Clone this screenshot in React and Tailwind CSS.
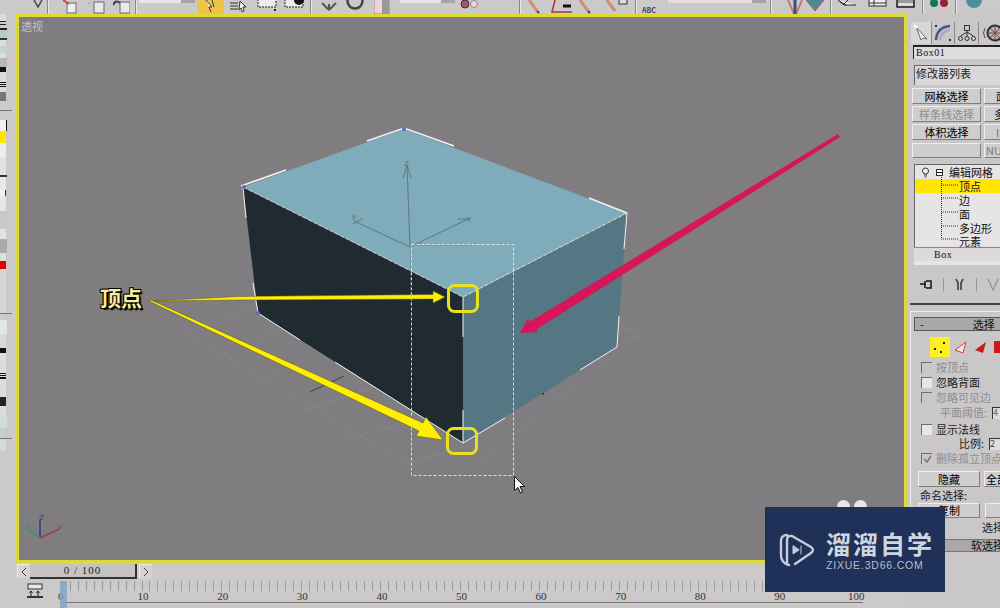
import React from "react";

const F = "font-['Noto_Sans_CJK_SC','Liberation_Sans',sans-serif]";

const strip = [
  ["h-[7px] w-[6px]", "bg-[#dcdada]"],
  ["h-[1px] w-[6px]", "bg-[#222]"],
  ["h-[2px] w-[6px]", "bg-[#ccc]"],
  ["h-[1px] w-[6px]", "bg-[#222]"],
  ["h-[3px] w-[6px]", "bg-[#ccc]"],
  ["h-[2px] w-[7px]", "bg-[#222]"],
  ["h-[8px] w-[7px]", "bg-[#b9cccc]"],
  ["h-[2px] w-[7px]", "bg-[#333]"],
  ["h-[6px] w-[6px]", "bg-[#ddd]"],
  ["h-[7px] w-[7px]", "bg-[#c3d3d3]"],
  ["h-[5px] w-[6px]", "bg-[#ddd]"],
  ["h-[9px] w-[7px]", "bg-[#b8b8b8]"],
  ["h-[5px] w-[6px]", "bg-[#111]"],
  ["h-[10px] w-[6px]", "bg-[#ddd]"],
  ["h-[1px] w-[6px]", "bg-[#111]"],
  ["h-[1px] w-[6px]", "bg-[#ddd]"],
  ["h-[1px] w-[6px]", "bg-[#111]"],
  ["h-[1px] w-[6px]", "bg-[#ddd]"],
  ["h-[1px] w-[6px]", "bg-[#111]"],
  ["h-[5px] w-[6px]", "bg-[#ddd]"],
  ["h-[9px] w-[6px]", "bg-[#777]"],
  ["h-[9px] w-[6px]", "bg-[#ccc]"],
  ["h-[1px] w-[12px]", "bg-[#777]"],
  ["h-[9px] w-[6px]", "bg-[#ccc]"],
  ["h-[11px] w-[7px]", "bg-[#f2f2f2] border-r border-[#111]"],
  ["h-[12px] w-[6px]", "bg-[#ffe600]"],
  ["h-[14px] w-[6px]", "bg-[#ececec]"],
  ["h-[18px] w-[6px]", "bg-[#e2e2e2]"],
  ["h-[2px] w-[7px]", "bg-[#333]"],
  ["h-[13px] w-[6px]", "bg-[#e8e8e8]"],
  ["h-[6px] w-[6px]", "bg-[#f2f2f2] border-r border-[#333]"],
  ["h-[15px] w-[6px]", "bg-[#e6e6e6]"],
  ["h-[18px] w-[7px]", "bg-[#c8c8c8]"],
  ["h-[10px] w-[6px]", "bg-[#e2e2e2]"],
  ["h-[14px] w-[7px]", "bg-[#aaa]"],
  ["h-[8px] w-[6px]", "bg-[#ddd]"],
  ["h-[8px] w-[6px]", "bg-[#e50000]"],
  ["h-[44px] w-[6px]", "bg-[#d6d6d6]"],
  ["h-[1px] w-[12px]", "bg-[#777]"],
  ["h-[6px] w-[6px]", "bg-[#ccc]"],
  ["h-[14px] w-[7px]", "bg-[#dfe6e6]"],
  ["h-[14px] w-[6px]", "bg-[#d9d9d9]"],
  ["h-[5px] w-[6px]", "bg-[#111]"],
  ["h-[20px] w-[6px]", "bg-[#ddd]"],
  ["h-[1px] w-[6px]", "bg-[#111]"],
  ["h-[1px] w-[6px]", "bg-[#ddd]"],
  ["h-[1px] w-[6px]", "bg-[#111]"],
  ["h-[1px] w-[6px]", "bg-[#ddd]"],
  ["h-[2px] w-[6px]", "bg-[#111]"],
  ["h-[18px] w-[6px]", "bg-[#ddd]"],
  ["h-[9px] w-[6px]", "bg-[#222]"],
  ["h-[10px] w-[6px]", "bg-[#ddd]"],
  ["h-[12px] w-[7px]", "bg-[#cfdcdc]"],
  ["h-[10px] w-[6px]", "bg-[#ccc]"],
  ["h-[1px] w-[12px]", "bg-[#777]"],
  ["h-[12px] w-[6px]", "bg-[#cfdcdc]"],
];

const Sep = ({ c }) => <div className={`h-[14px] w-[2px] border-l border-[#8a8888] bg-[#e8e6e6] ${c}`} />;

const Toolbar = () => (
  <div className="flex h-[14px] w-[1000px] items-start overflow-hidden bg-[#cbc9c9]">
    <svg className="ml-[33px] h-[14px] w-[12px]" viewBox="0 0 12 14"><path d="M1 0l4 7 4-7" fill="none" stroke="#444" strokeWidth="1.5" /></svg>
    <Sep c="ml-[2px]" />
    <svg className="ml-[14px] h-[14px] w-[14px]" viewBox="0 0 14 14"><rect x="4" y="3" width="9" height="10" fill="#eee" stroke="#667" /><path d="M0 0l6 4" stroke="#c44" strokeWidth="2" /></svg>
    <svg className="ml-[11px] h-[14px] w-[17px]" viewBox="0 0 17 14"><rect x="6" y="2" width="10" height="11" fill="#e8e8e8" stroke="#667" /><path d="M0 3h4" stroke="#889" strokeDasharray="1 1" /></svg>
    <svg className="ml-[8px] h-[14px] w-[17px]" viewBox="0 0 17 14"><rect x="7" y="2" width="10" height="11" fill="#e8e8e8" stroke="#667" /><path d="M0 5q3-6 7-2" fill="none" stroke="#345" strokeWidth="2" /></svg>
    <Sep c="ml-[5px]" />
    <div className="ml-[2px] flex h-[3px] w-[56px]"><div className="w-[42px] bg-[#e6e4e4]" /><div className="w-[14px] bg-[#a5a3a3]" /></div>
    <div className="ml-[2px] flex h-[14px] w-[27px] items-start justify-center bg-[#f0c24a]">
      <svg className="h-[12px] w-[14px]" viewBox="0 0 14 12"><path d="M2 0l6 7-3 0 2 5M8 0l2 7" fill="#fff" stroke="#333" /></svg>
    </div>
    <svg className="ml-[6px] h-[14px] w-[18px]" viewBox="0 0 18 14"><path d="M0 3h8M0 6h8M0 9h8" stroke="#333" /><path d="M10 1l6 6h-3l1 4-2 1-1-4-2 2z" fill="#eee" stroke="#333" /></svg>
    <svg className="ml-[9px] h-[14px] w-[20px]" viewBox="0 0 20 14"><rect x="1" y="-2" width="18" height="9" fill="#ececec" stroke="#222" strokeDasharray="2 1" /><rect x="17" y="9" width="2" height="2" fill="#222" /></svg>
    <svg className="ml-[7px] h-[14px] w-[20px]" viewBox="0 0 20 14"><rect x="1" y="-2" width="18" height="9" fill="#ececec" stroke="#222" strokeDasharray="2 1" /><circle cx="15" cy="0" r="5" fill="#111" /></svg>
    <Sep c="ml-[6px]" />
    <svg className="ml-[9px] h-[14px] w-[16px]" viewBox="0 0 16 14"><path d="M8 10L1 3M8 10l7-7M8 10V4" fill="none" stroke="#555" strokeWidth="2" /></svg>
    <svg className="ml-[9px] h-[14px] w-[18px]" viewBox="0 0 18 14"><circle cx="9" cy="1" r="7.500" fill="none" stroke="#444" strokeWidth="2.5" /></svg>
    <svg className="ml-[10px] h-[14px] w-[16px]" viewBox="0 0 16 14"><rect x="0" y="-2" width="15" height="16" fill="#efd6d6" stroke="#888" /><rect x="8" y="-2" width="7" height="16" fill="#999" /></svg>
    <div className="ml-[10px] flex h-[3px] w-[55px]"><div className="w-[41px] bg-[#e6e4e4]" /><div className="w-[14px] bg-[#a5a3a3]" /></div>
    <svg className="ml-[5px] h-[14px] w-[18px]" viewBox="0 0 18 14"><circle cx="5" cy="4" r="4" fill="#a55" stroke="#335" /><circle cx="14" cy="4" r="3.5" fill="#ddd" stroke="#b77" /></svg>
    <Sep c="ml-[41px]" />
    <svg className="ml-[7px] h-[14px] w-[14px]" viewBox="0 0 14 14"><path d="M1 0l8 11" stroke="#d68a70" strokeWidth="3" /><path d="M9 11l2 2" stroke="#444" strokeWidth="2" /></svg>
    <svg className="ml-[9px] h-[14px] w-[22px]" viewBox="0 0 22 14"><path d="M4 0L1 12h20" fill="none" stroke="#a33" strokeWidth="1.5" /><path d="M12 6h8" stroke="#111" strokeWidth="3" /></svg>
    <svg className="ml-[6px] h-[14px] w-[14px]" viewBox="0 0 14 14"><path d="M1 0l8 11" stroke="#d68a70" strokeWidth="3" /><path d="M9 11l2 2" stroke="#444" strokeWidth="2" /></svg>
    <svg className="ml-[13px] h-[14px] w-[22px]" viewBox="0 0 22 14"><path d="M1 0l8 11" stroke="#d68a70" strokeWidth="3" /><rect x="13" y="-2" width="8" height="6" fill="#ddd" stroke="#333" /></svg>
    <Sep c="ml-[7px]" />
    <div className={`ml-[5px] flex h-[14px] w-[23px] items-end text-[7px] leading-[8px] font-bold text-[#445] ${F}`}>ABC</div>
    <div className="ml-[3px] flex h-[3px] w-[98px]"><div className="w-[84px] bg-[#e6dede]" /><div className="w-[14px] bg-[#a5a3a3]" /></div>
    <Sep c="ml-[4px]" />
    <svg className="ml-[15px] h-[14px] w-[16px]" viewBox="0 0 16 14"><path d="M1 0l6 14M15 0L9 14" stroke="#c77" strokeWidth="2" /><path d="M8 0v14" stroke="#357" strokeWidth="3" /></svg>
    <svg className="ml-[3px] h-[14px] w-[18px]" viewBox="0 0 18 14"><path d="M0 0h18L9 11z" fill="#4e8a94" /><path d="M0 0l9 11 9-11" fill="none" stroke="#b55" /></svg>
    <Sep c="ml-[6px]" />
    <svg className="ml-[6px] h-[14px] w-[18px]" viewBox="0 0 18 14"><path d="M0 0l6 5h12M1 1l7 4M5 5l5-5" fill="#fff" stroke="#222" /></svg>
    <svg className="ml-[12px] h-[14px] w-[19px]" viewBox="0 0 19 14"><rect x="1" y="-2" width="17" height="8" fill="#eee" stroke="#333" /><path d="M1 3h17M6 -2v8" stroke="#333" /></svg>
    <svg className="ml-[9px] h-[14px] w-[19px]" viewBox="0 0 19 14"><rect x="1" y="-2" width="17" height="9" fill="#999" stroke="#222" strokeWidth="1.5" /><rect x="2" y="3" width="15" height="3" fill="#ddd" /></svg>
    <Sep c="ml-[7px]" />
    <svg className="ml-[6px] h-[14px] w-[19px]" viewBox="0 0 19 14"><circle cx="4" cy="3" r="4" fill="#175" /><circle cx="14" cy="3" r="4" fill="#923" /></svg>
    <Sep c="ml-[6px]" />
    <svg className="ml-[6px] h-[14px] w-[22px]" viewBox="0 0 22 14"><circle cx="11" cy="0" r="8" fill="#4d8d9c" /></svg>
  </div>
);

const Scene = () => (
  <svg className="absolute inset-0" width="885" height="545" viewBox="19 17 885 545">
    {/* ground grid */}
    <g stroke="#878587" strokeWidth="1" fill="none">
      <path d="M180 335L258 305M210 360L300 320M250 385L330 350M300 412L380 385M340 440L420 420M400 465L470 445M520 390L640 335M540 380L620 320M600 320L645 335" />
      <path d="M190 335L420 470M470 470L640 335M560 395L530 380" />
    </g>
    <path d="M310 392l34-16" stroke="#333" strokeOpacity="0.8" />
    <path d="M540 392l4 2" stroke="#222" strokeWidth="1.5" />
    {/* box */}
    <polygon points="243,187 404,129 627,213 463,297" fill="#7fabbb" />
    <polygon points="243,187 463,297 463,443 258,313" fill="#1f2a31" />
    <polygon points="463,297 627,213 617,347 463,443" fill="#557783" />
    {/* white edges */}
    <g fill="none" stroke="#f2f2f2" strokeWidth="1">
      <path d="M243 187L463 297L627 213" strokeDasharray="5 1" opacity="0.8" />
      <path d="M241 186L286 170M367 141L404 128L454 146M589 198L627 213" strokeWidth="1.5" />
      <path d="M243 187L246 218M253 283L258 313L300 340M463 297V337M463 410V443L335 362M463 443L505 418M580 370L617 347L619 316M627 213L624 249" />
    </g>
    <circle cx="404" cy="129" r="2" fill="#6a63c9" />
    <circle cx="244" cy="187" r="2" fill="#6a63c9" />
    <circle cx="258" cy="313" r="2" fill="#6a63c9" />
    <circle cx="613" cy="346" r="2" fill="#5a6fa9" />
    {/* tripod */}
    <g fill="none" stroke="#5d7780" strokeWidth="1">
      <path d="M410 247L407 165M403 178L407 165L411 178" />
      <path d="M410 247L354 221M353 224L363 218" />
      <path d="M412 246L470 218M458 219h12" />
    </g>
    <path d="M411 247v60M416 245h60" stroke="#777" strokeDasharray="3 2" fill="none" />
    <text x="404" y="166" fontSize="8" fill="#5d7780" fontFamily="Liberation Sans">Z</text>
    <text x="351" y="220" fontSize="8" fill="#5d7780" fontFamily="Liberation Sans">X</text>
    <text x="466" y="222" fontSize="8" fill="#5d7780" fontFamily="Liberation Sans">Y</text>
    {/* selection */}
    <rect x="411.5" y="244.5" width="102" height="231" fill="none" stroke="#eee" strokeDasharray="3 2" opacity="0.85" />
    {/* pink arrow */}
    <polygon points="520,333 527,320 531,321 838,134 840,137 537,329 538,332" fill="#d5175a" />
    {/* yellow arrows */}
    <polygon points="149,301 240,296.5 433,294.5 433,291 445,297 433,303 433,299 240,300" fill="#ffee00" stroke="#55551e" strokeWidth="0.5" />
    <polygon points="149,301 151,300 423,423 426,417 443,440 416,436 419,431" fill="#ffee00" stroke="#55551e" strokeWidth="0.5" />
    <rect x="448.5" y="285.5" width="29" height="26" rx="6" fill="none" stroke="#e8e020" strokeWidth="3" />
    <rect x="447.5" y="428.5" width="29" height="25" rx="6" fill="none" stroke="#e8e020" strokeWidth="3" />
    {/* cursor */}
    <path d="M514.500 476.500v14l3.500-3 2.500 5.500 2-1-2.500-5.500h4.500z" fill="#fff" stroke="#111" />
    {/* axis */}
    <g fill="none" strokeWidth="1.5">
      <path d="M40 538V520" stroke="#2b3f8c" />
      <path d="M40 538L59 529" stroke="#a33b46" />
      <path d="M40 538L29 530" stroke="#2d9a5a" />
    </g>
    <text x="39" y="520" fontSize="8" fill="#2b3f8c" fontFamily="Liberation Sans">Z</text>
    <text x="25" y="530" fontSize="8" fill="#2d9a5a" fontFamily="Liberation Sans">X</text>
    <text x="57" y="530" fontSize="8" fill="#a33b46" fontFamily="Liberation Sans">Y</text>
  </svg>
);

const Btn = ({ children, c = "" }) => (
  <div className={`flex items-center justify-center border-t border-l border-[#eeeeee] border-r-[#7f7d7d] border-b-[#7f7d7d] border-r border-b bg-[#cfcdcd] text-[11px] leading-none whitespace-nowrap ${c}`}>{children}</div>
);

const Check = ({ label, checked, dim, c = "" }) => (
  <div className={`flex h-[15px] items-center whitespace-nowrap text-[11px] leading-none ${dim ? "text-[#8f8d8d]" : "text-[#1a1a1a]"} ${c}`}>
    <span className={`mr-[4px] flex h-[11px] w-[11px] shrink-0 items-center justify-center border-t border-l border-[#6f6d6d] text-[10px] ${dim ? "bg-[#c9c7c7]" : "bg-[#e8e6e6]"}`}>
      {checked && <svg width="9" height="9" viewBox="0 0 9 9"><path d="M1 4l3 3 4-6" fill="none" stroke="#777" strokeWidth="1.5" /></svg>}
    </span>
    {label}
  </div>
);

const Stack = () => (
  <div className="relative ml-[7px] mt-[6px] h-[83px] w-[90px] border-t border-l border-[#666] bg-[#e6e4e4] text-[11px] leading-none text-[#111]">
    <div className="flex h-[14px] items-center">
      <svg className="ml-[6px] h-[11px] w-[9px]" viewBox="0 0 9 11"><circle cx="4.5" cy="4" r="3" fill="#f3f3e0" stroke="#333" /><path d="M3 8h3M3.500 10h2" stroke="#333" /></svg>
      <span className="ml-[6px] flex h-[7px] w-[7px] items-center justify-center border border-[#333] bg-white"><span className="h-[1px] w-[5px] bg-[#111]" /></span>
      <span className="ml-[6px]">编辑网格</span>
    </div>
    <div className="flex h-[14px] items-center bg-[#ffe600] pl-[44px]">顶点</div>
    <div className="flex h-[14px] items-center pl-[44px]">边</div>
    <div className="flex h-[14px] items-center pl-[44px]">面</div>
    <div className="flex h-[14px] items-center pl-[44px]">多边形</div>
    <div className="flex h-[13px] items-center pl-[44px]">元素</div>
    <svg className="absolute left-[26px] top-[12px]" width="17" height="70" viewBox="0 0 17 70"><path d="M0.500 0V62M0 8H17M0 21H17M0 35H17M0 49H17M0 62H17" stroke="#333" strokeDasharray="1 1" fill="none" /></svg>
  </div>
);

const Panel = () => (
  <div className={`h-full w-[93px] shrink-0 overflow-hidden bg-[#c9c7c7] ${F}`}>
    <div className="flex h-[31px] w-[110px] items-center pl-[4px] pt-[6px]">
      <div className="flex h-[22px] w-[21px] items-center justify-center border-r border-[#8a8888] bg-[#d8d6d6]">
        <svg width="18" height="18" viewBox="0 0 18 18"><path d="M4 3l11 12-4-1-2 2z" stroke="#667" strokeWidth="1" fill="#eee" /><path d="M2 1l3 3" stroke="#fff" strokeWidth="2" /></svg>
      </div>
      <div className="flex h-[22px] w-[23px] items-center justify-center border-r border-[#8a8888]">
        <svg width="18" height="18" viewBox="0 0 18 18"><path d="M2 16Q3 3 16 2" fill="none" stroke="#3f5a85" strokeWidth="2.5" /><path d="M6 16Q7 7 16 6" fill="none" stroke="#aab" strokeWidth="2.5" /><rect x="1" y="1" width="2" height="2" fill="#333" /><rect x="15" y="15" width="2" height="2" fill="#333" /></svg>
      </div>
      <div className="flex h-[22px] w-[24px] items-center justify-center border-r border-[#8a8888]">
        <svg width="18" height="18" viewBox="0 0 18 18" fill="none" stroke="#333"><rect x="6.5" y="1.5" width="5" height="5" /><circle cx="2.5" cy="14.5" r="2" /><circle cx="9" cy="14.5" r="2" /><circle cx="15.5" cy="14.5" r="2" /><path d="M9 7v5M2.500 12l6.500-4 6.500 4" /></svg>
      </div>
      <div className="ml-[3px] flex h-[22px] w-[22px] items-center justify-center">
        <svg width="22" height="18" viewBox="0 0 22 18"><circle cx="13" cy="9" r="7.5" fill="#caa" stroke="#333" strokeWidth="2" /><path d="M13 2v14M6 9h14M8 4l10 10M18 4L8 14" stroke="#555" /><path d="M3 4q-3 5 0 10" fill="none" stroke="#555" /></svg>
      </div>
    </div>
    <div className="ml-[6px] flex h-[14px] w-[90px] items-start border-t-2 border-l border-[#222] bg-[#dedcdc] pl-[2px] font-['Liberation_Serif',serif] text-[10px] leading-[11px] tracking-[0.5px] text-[#111]">Box01</div>
    <div className="ml-[7px] mt-[6px] flex h-[20px] w-[90px] items-start border-t border-l border-[#666] bg-[#d9d7d7] pl-[1px] pt-[2px] text-[11px] leading-none text-[#222]">修改器列表</div>
    <div className="ml-[5px] mt-[3px] flex h-[16px] w-[100px] gap-[3px]">
      <Btn c="w-[69px] shrink-0">网格选择</Btn><Btn c="w-[30px] shrink-0 justify-start pl-[11px]">面</Btn>
    </div>
    <div className="ml-[5px] mt-[2px] flex h-[16px] w-[100px] gap-[3px]">
      <Btn c="w-[69px] shrink-0 text-[#8f8d8d]">样条线选择</Btn><Btn c="w-[30px] shrink-0 justify-start pl-[9px]">多</Btn>
    </div>
    <div className="ml-[5px] mt-[2px] flex h-[16px] w-[100px] gap-[3px]">
      <Btn c="w-[69px] shrink-0">体积选择</Btn><Btn c="w-[30px] shrink-0 justify-start pl-[11px] text-[#777]">I</Btn>
    </div>
    <div className="ml-[5px] mt-[3px] flex h-[15px] w-[100px] gap-[3px]">
      <Btn c="w-[69px] shrink-0" /><Btn c="w-[30px] shrink-0 justify-start pl-[1px] text-[8px] text-[#777]">NURBS</Btn>
    </div>
    <Stack />
    <div className="ml-[7px] flex h-[14px] w-[90px] items-center border-t border-[#8a8888] bg-[#dcdada] pl-[20px] font-['Liberation_Serif',serif] text-[10px] leading-none tracking-[0.5px] text-[#111]">Box</div>
    <div className="ml-[7px] h-[4px] w-[90px] bg-[#e6e4e4]" />
    <div className="ml-[13px] mt-[12px] flex h-[15px] w-[90px] items-center">
      <svg width="14" height="11" viewBox="0 0 14 11"><path d="M0 5h5M5 2v7M6 2h5v7H6" fill="none" stroke="#111" strokeWidth="1.5" /></svg>
      <div className="ml-[9px] h-[14px] w-[1px] bg-[#999]" />
      <svg className="ml-[11px]" width="9" height="13" viewBox="0 0 9 13"><path d="M1 1l2 4v7M8 1L6 5v7" fill="none" stroke="#333" strokeWidth="1.5" /></svg>
      <div className="ml-[12px] h-[14px] w-[1px] bg-[#999]" />
      <svg className="ml-[10px]" width="12" height="13" viewBox="0 0 12 13"><path d="M1 1l5 11 5-11" fill="none" stroke="#999" strokeWidth="1.5" /></svg>
    </div>
    <div className="mt-[11px] ml-[3px] h-[2px] w-[95px] bg-[#444]" />
    <div className="ml-[3px] mt-[6px] w-[95px] border-t border-l border-[#eeeeee]">
      <div className="ml-[3px] mt-[5px] flex h-[14px] w-[90px] items-center border border-[#555] bg-[#a9a7a7] text-[11px] leading-none text-[#111]">
        <span className="ml-[5px]">-</span><span className="ml-[49px]">选择</span>
      </div>
      <div className="ml-[19px] mt-[6px] flex h-[20px] items-center">
        <div className="relative h-[20px] w-[20px] bg-[#ffee22]">
          <span className="absolute left-[4px] top-[11px] h-[2px] w-[2px] bg-[#222]" />
          <span className="absolute left-[13px] top-[5px] h-[2px] w-[2px] bg-[#222]" />
          <span className="absolute left-[10px] top-[14px] h-[2px] w-[2px] bg-[#222]" />
        </div>
        <svg className="ml-[4px]" width="13" height="13" viewBox="0 0 13 13"><path d="M1 9L12 1 9 12z" fill="#f2e2e2" stroke="#c44" /></svg>
        <svg className="ml-[7px]" width="13" height="13" viewBox="0 0 13 13"><path d="M1 9L12 1 9 12z" fill="#cc1a1a" /></svg>
        <div className="ml-[7px] h-[12px] w-[8px] bg-[#cc1a1a]" />
      </div>
      <div className="ml-[10px] mt-[3px]">
        <Check label="按顶点" dim />
        <Check label="忽略背面" />
        <Check label="忽略可见边" dim />
        <div className="flex h-[15px] items-center whitespace-nowrap pl-[19px] text-[11px] leading-none text-[#8f8d8d]">平面阈值:<span className="ml-[5px] h-[12px] w-[20px] border-t border-l border-[#333] bg-[#ddd] text-[9px] text-[#666]">4</span></div>
        <div className="h-[2px]" />
        <Check label="显示法线" />
        <div className="flex h-[13px] items-center whitespace-nowrap pl-[38px] text-[11px] leading-none text-[#222]">比例:<span className="ml-[5px] h-[12px] w-[20px] border-t border-l border-[#333] bg-[#ddd] text-[9px] text-[#444]">2</span></div>
        <div className="h-[1px]" />
        <Check label="删除孤立顶点" checked dim />
      </div>
      <div className="ml-[7px] mt-[5px] flex h-[16px] w-[100px] gap-[4px]">
        <Btn c="w-[62px] shrink-0">隐藏</Btn><Btn c="w-[34px] shrink-0 justify-start pl-[1px]">全部</Btn>
      </div>
      <div className="ml-[9px] mt-[1px] flex h-[15px] items-center whitespace-nowrap text-[11px] leading-none text-[#222]">命名选择:</div>
      <div className="ml-[7px] flex h-[15px] w-[100px] gap-[5px]">
        <Btn c="w-[62px] shrink-0">复制</Btn><Btn c="w-[30px] shrink-0" />
      </div>
      <div className="mt-[2px] flex h-[15px] items-center pl-[71px] text-[11px] leading-none text-[#222] whitespace-nowrap">选择</div>
      <div className="ml-[3px] mt-[4px] flex h-[13px] w-[90px] items-center border border-[#777] bg-[#a9a7a7] pl-[56px] text-[11px] leading-none whitespace-nowrap text-[#111]">软选择</div>
    </div>
  </div>
);

const Timeline = () => (
  <div className={`flex h-[16px] items-center pl-[17px] ${F}`}>
    <div className="flex h-[14px] w-[13px] items-center justify-center border-t border-l border-[#eee] bg-[#d4d2d2]">
      <svg width="6" height="10" viewBox="0 0 6 10"><path d="M5 1L1 5l4 4" fill="none" stroke="#444" /></svg>
    </div>
    <div className="flex h-[15px] w-[107px] items-center justify-center border-r-2 border-b-2 border-[#333] bg-[#c5c3c3] font-['Liberation_Serif',serif] text-[11px] leading-none tracking-[1px] text-[#222]">0 / 100</div>
    <div className="ml-[2px] flex h-[14px] w-[13px] items-center justify-center border-t border-l border-[#eee] bg-[#d4d2d2]">
      <svg width="6" height="10" viewBox="0 0 6 10"><path d="M1 1l4 4-4 4" fill="none" stroke="#444" /></svg>
    </div>
  </div>
);

const labels = [0, 10, 20, 30, 40, 50, 60, 70, 80, 90];

const Ruler = () => (
  <div className="flex h-[29px] items-start">
    <svg className="ml-[27px] mt-[4px]" width="16" height="16" viewBox="0 0 16 16"><rect x="1" y="1" width="14" height="5" fill="#e8e8e8" stroke="#333" /><path d="M4 8v5M2.500 10L4 8l1.500 2M11 8v5M9.500 10L11 8l1.500 2" fill="none" stroke="#222" /><path d="M0 14h16" stroke="#333" strokeWidth="2" /></svg>
    <div className="relative ml-[17px] mt-[2px] h-[27px] w-[822px] font-['Liberation_Serif',serif]">
      <div className="flex h-[10px] pl-[2px]">
        {Array.from({ length: 101 }, (_, i) => (
          <div key={i} className="h-[10px] w-[7.96px] shrink-0 border-l border-[#9b9999]" />
        ))}
      </div>
      <div className="-ml-[2px] flex h-[10px] w-[822px]">
        {labels.map((n) => (
          <div key={n} className="w-[79.6px] shrink-0 text-[11px] leading-[11px] text-[#333]">{n}</div>
        ))}
        <div className="-ml-[6px] shrink-0 text-[11px] leading-[11px] text-[#333]">100</div>
      </div>
      <div className="mt-[1px] h-[1px] w-[803px] bg-[#777]" />
      <div className="absolute left-0 top-0 h-[27px] w-[7px] bg-[#7fa8c6] opacity-80" />
    </div>
  </div>
);

const Watermark = () => (
  <div className="absolute left-[765px] top-[507px] flex h-[85px] w-[180px] items-center bg-[#1f3059] pl-[14px] text-[#d0d6e0]">
    <svg width="36" height="36" viewBox="0 0 36 36" fill="none" stroke="#c6ccd8" strokeWidth="2.4" strokeLinejoin="round" strokeLinecap="round">
      <path d="M10 33Q2 31 2 23V9Q2 3 8 3" />
      <path d="M8 31V8Q8 3 13 4L32 15Q36 18 32 21L16 32" />
      <path d="M14 14v8l6-4zM22 14v8" fill="#c6ccd8" strokeWidth="1" />
    </svg>
    <div className="ml-[11px] flex flex-col">
      <div className={`text-[25px] leading-[30px] font-bold tracking-[2px] whitespace-nowrap ${F}`}>溜溜自学</div>
      <div className="mt-[1px] font-['Liberation_Sans',sans-serif] text-[10.500px] leading-[12px] tracking-[0.8px] whitespace-nowrap text-[#b6bdcc]">ZIXUE.3D66.COM</div>
    </div>
  </div>
);

export default function App() {
  return (
    <div className="relative h-[608px] w-[1000px] overflow-hidden bg-[#cbc9c9]">
      <Toolbar />
      <div className="flex h-[594px]">
        <div className="flex w-[907px] flex-col">
          <div className="flex h-[551px]">
            <div className="flex w-[16px] shrink-0 flex-col overflow-hidden">
              {strip.map(([size, col], i) => (
                <div key={i} className={`${size} ${col} shrink-0`} />
              ))}
            </div>
            <div className={`relative flex-1 border-[3px] border-[#dcd93a] bg-[#7f7d7f] ${F}`}>
              <div className="absolute left-[2px] top-[4px] text-[11px] leading-none text-[#c4c2c2]">透视</div>
              <Scene />
              <div className="absolute left-[81px] top-[268px] text-[21px] leading-[24px] font-bold text-[#f4eea0] [text-shadow:1px_1px_0_#000,-1px_-1px_0_#000,1px_-1px_0_#000,-1px_1px_0_#000,2px_2px_1px_#000]">顶点</div>
              <div className="absolute left-[818px] top-[483px] h-[13px] w-[13px] rounded-full bg-[#e8e8e8]" />
              <div className="absolute left-[835px] top-[483px] h-[13px] w-[13px] rounded-full bg-[#e8e8e8]" />
            </div>
          </div>
          <Timeline />
          <Ruler />
        </div>
        <div className="h-full w-[93px] shrink-0">
          <Panel />
        </div>
      </div>
      <Watermark />
    </div>
  );
}
